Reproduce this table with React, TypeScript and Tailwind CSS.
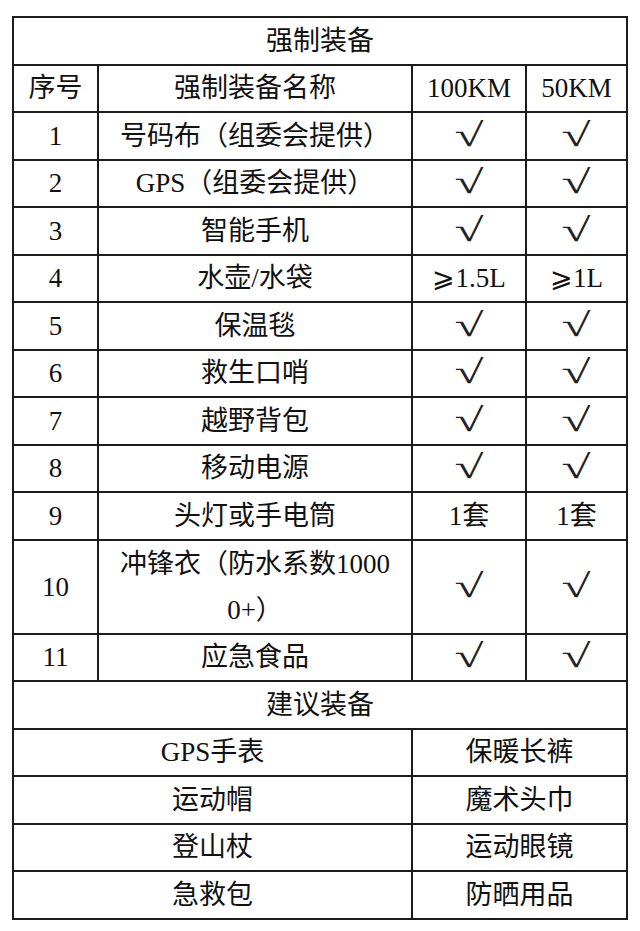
import React from "react";

const CHECK = "√";

const mandatory: { no: string; name: React.ReactNode; a: string; b: string; tall?: boolean }[] = [
  { no: "1", name: "号码布（组委会提供）", a: CHECK, b: CHECK },
  { no: "2", name: "GPS（组委会提供）", a: CHECK, b: CHECK },
  { no: "3", name: "智能手机", a: CHECK, b: CHECK },
  { no: "4", name: "水壶/水袋", a: "⩾1.5L", b: "⩾1L" },
  { no: "5", name: "保温毯", a: CHECK, b: CHECK },
  { no: "6", name: "救生口哨", a: CHECK, b: CHECK },
  { no: "7", name: "越野背包", a: CHECK, b: CHECK },
  { no: "8", name: "移动电源", a: CHECK, b: CHECK },
  { no: "9", name: "头灯或手电筒", a: "1套", b: "1套" },
  {
    no: "10",
    name: (
      <span className="block leading-[46px]">
        冲锋衣（防水系数1000
        <br />
        0+）
      </span>
    ),
    a: CHECK,
    b: CHECK,
    tall: true,
  },
  { no: "11", name: "应急食品", a: CHECK, b: CHECK },
];

const suggested = [
  ["GPS手表", "保暖长裤"],
  ["运动帽", "魔术头巾"],
  ["登山杖", "运动眼镜"],
  ["急救包", "防晒用品"],
];

const cell = "border-2 border-[#1c1c1c] text-center align-middle p-0";

function Mark({ v }: { v: string }) {
  if (v !== CHECK) return <>{v}</>;
  return (
    <span className="inline-block text-[33px] leading-[30px] scale-x-[1.6] translate-y-[1px] text-[#222]">
      {v}
    </span>
  );
}

export default function App() {
  return (
    <div
      className="w-[640px] h-[931px] bg-white pt-4 pl-3 text-[#111] text-[27px] leading-[40px]"
      style={{ fontFamily: '"Liberation Serif", "Noto Sans CJK SC", serif' }}
    >
      <table className="w-[614px] table-fixed border-collapse">
        <colgroup>
          <col className="w-[85px]" />
          <col className="w-[314px]" />
          <col className="w-[114px]" />
          <col className="w-[101px]" />
        </colgroup>
        <tbody>
          <tr className="h-[47.5px]">
            <td colSpan={4} className={cell}>
              强制装备
            </td>
          </tr>
          <tr className="h-[47.5px]">
            <td className={cell}>序号</td>
            <td className={cell}>强制装备名称</td>
            <td className={cell}>100KM</td>
            <td className={cell}>50KM</td>
          </tr>
          {mandatory.map((r) => (
            <tr key={r.no} className={r.tall ? "h-[93px]" : "h-[47.5px]"}>
              <td className={cell}>{r.no}</td>
              <td className={cell}>{r.name}</td>
              <td className={cell}>
                <Mark v={r.a} />
              </td>
              <td className={cell}>
                <Mark v={r.b} />
              </td>
            </tr>
          ))}
          <tr className="h-[47.5px]">
            <td colSpan={4} className={cell}>
              建议装备
            </td>
          </tr>
          {suggested.map(([l, r]) => (
            <tr key={l} className="h-[47.5px]">
              <td colSpan={2} className={cell}>
                {l}
              </td>
              <td colSpan={2} className={cell}>
                {r}
              </td>
            </tr>
          ))}
        </tbody>
      </table>
    </div>
  );
}
